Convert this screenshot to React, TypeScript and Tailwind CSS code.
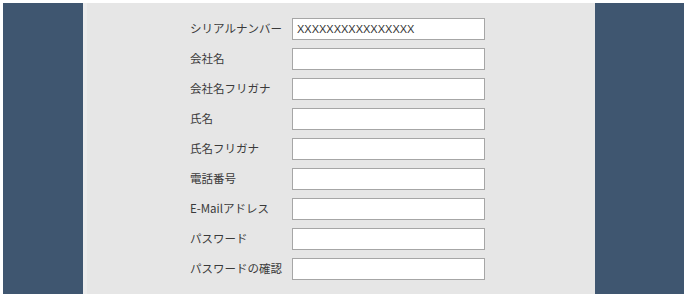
const fields = [
  { label: "シリアルナンバー", value: "XXXXXXXXXXXXXXXX" },
  { label: "会社名", value: "" },
  { label: "会社名フリガナ", value: "" },
  { label: "氏名", value: "" },
  { label: "氏名フリガナ", value: "" },
  { label: "電話番号", value: "" },
  { label: "E-Mailアドレス", value: "" },
  { label: "パスワード", value: "" },
  { label: "パスワードの確認", value: "" },
];

export default function App() {
  return (
    <div
      className="w-[687px] h-[298px] bg-white p-[3px] overflow-hidden"
      style={{ fontFamily: '"Noto Sans CJK JP", "Liberation Sans", sans-serif' }}
    >
      <div className="flex h-[291px] w-[681px]">
        {/* 左パネル */}
        <div className="w-[80px] bg-[#3f5670]" />
        {/* フォーム */}
        <div className="flex-1 bg-[#e6e6e6] border-l-[4px] border-[#ececec] pt-[11px] pl-[103px]">
          {fields.map((f) => (
            <div key={f.label} className="flex items-center h-[30px]">
              <label className="w-[102px] text-[11.5px] text-[#3a3a3a] leading-none">
                {f.label}
              </label>
              <input
                type="text"
                defaultValue={f.value}
                className="w-[193px] h-[22px] bg-white border border-[#a6a6a6] px-[4px] text-[11px] text-[#333] outline-none"
                style={{ fontFamily: '"Liberation Sans", "Noto Sans CJK JP", sans-serif' }}
              />
            </div>
          ))}
        </div>
        {/* 右パネル */}
        <div className="w-[89px] bg-[#3f5670]" />
      </div>
    </div>
  );
}
